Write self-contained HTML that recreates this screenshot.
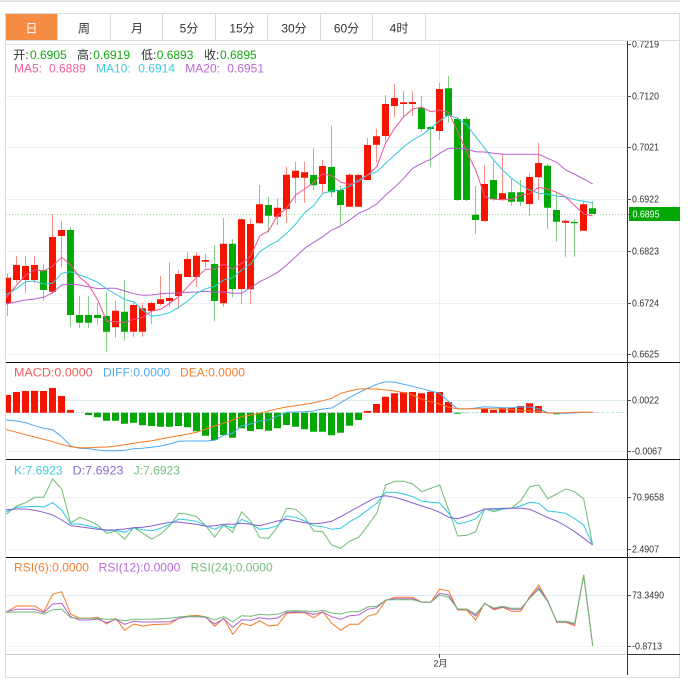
<!DOCTYPE html>
<html><head><meta charset="utf-8"><style>
html,body{margin:0;padding:0;background:#fff;width:688px;height:682px;overflow:hidden}
svg{display:block}
text{font-family:"Liberation Sans","Noto Sans CJK SC",sans-serif}
.t{font-size:12px;fill:#333}
.a{font-size:10px;fill:#333}
polyline{fill:none;stroke-width:1}
</style></head><body>
<svg xmlns="http://www.w3.org/2000/svg" width="688" height="682" viewBox="0 0 688 682">
<defs>
<clipPath id="c"><rect x="6" y="41" width="621" height="613"/></clipPath>
<clipPath id="ax"><rect x="628" y="41" width="52" height="620"/></clipPath>
</defs>
<rect x="0" y="0.5" width="680" height="1.2" fill="#d2d2d2"/>
<rect x="5.5" y="13.5" width="674" height="664" fill="none" stroke="#dcdcdc" stroke-width="1"/>
<rect x="6" y="14" width="51" height="26" fill="#f58c43"/>
<rect x="6" y="40" width="674" height="1" fill="#dcdcdc"/>
<path d="M57.5 14V40M110.5 14V40M162.5 14V40M215.5 14V40M267.5 14V40M320.5 14V40M372.5 14V40M425.5 14V40" stroke="#d8d8d8" stroke-width="1" fill="none"/>
<g text-anchor="middle">
<text x="31.5" y="32.5" class="t" style="fill:#fff">日</text>
<text x="84" y="32.5" class="t">周</text>
<text x="137" y="32.5" class="t">月</text>
<text x="189" y="32.5" class="t">5分</text>
<text x="242" y="32.5" class="t">15分</text>
<text x="294" y="32.5" class="t">30分</text>
<text x="346.5" y="32.5" class="t">60分</text>
<text x="399" y="32.5" class="t">4时</text>
</g>
<g fill="none" stroke-width="1">
<path d="M6 44.5H627" stroke="#dcebf1"/>
<path d="M6 96.5H627M6 147.5H627M6 199.5H627M6 251.5H627M6 303.5H627M6 354.5H627" stroke="#eaf0f4"/>
<path d="M6 400.5H627" stroke="#dcebf1"/>
<path d="M6 451.5H627M6 497.5H627M6 549.5H627M6 646.5H627" stroke="#eff3f5"/>
<path d="M6 595.5H627" stroke="#dcebf1"/>
<path d="M439.5 41V654" stroke="#edf1f4"/>
<path d="M6 412.5H627" stroke="#bfe2f0" stroke-dasharray="3 2"/>
<path d="M6 214.5H627" stroke="#8fdc8f" stroke-dasharray="1 2"/>
</g>
<g clip-path="url(#c)">
<path fill="none" stroke="#f98f87" stroke-width="1" d="M7.5 273.3V316M16.5 255.7V283M25.5 255.7V292.7M34.5 255.7V283.3M52.5 214V294M61.5 221V266.7M115.5 300.7V337.7M133.5 301.7V336.7M142.5 302.7V336.7M151.5 301.7V324M160.5 276V305.7M169.5 262.3V306.7M178.5 270V309.3M187.5 252.3V277M196.5 252.3V286.7M205.5 254V267.3M223.5 218V306.7M241.5 218.3V304M250.5 218.3V304M259.5 185V223.3M277.5 198.3V225M286.5 166.7V223.3M295.5 161.7V203M304.5 161.7V202.7M322.5 160V193M349.5 173.3V207M358.5 173.3V207M367.5 138V180M376.5 128.7V162.3M385.5 95V141.7M394.5 84V117.3M403.5 90.7V116.7M412.5 90.7V116M439.5 83V140M484.5 165V221.7M502.5 153.3V200.7M529.5 172.7V216M538.5 142.7V200M565.5 219.3V256.7M583.5 200.7V230.7"/>
<path fill="none" stroke="#80d080" stroke-width="1" d="M43.5 264V300.7M70.5 227.3V326.7M79.5 296V327.7M88.5 296V327.7M97.5 302.7V324.7M106.5 291.7V351.7M124.5 280V340.7M214.5 245V321.3M232.5 239.3V297.3M268.5 196.7V232.7M313.5 148.3V190M331.5 125.7V197M340.5 186V225M421.5 96V131.7M430.5 126V166.7M448.5 76V122.7M457.5 116.7V201M466.5 116.7V201M475.5 186V234M493.5 160.7V200.7M511.5 179V206M520.5 180V206M547.5 164V229.3M556.5 192.7V241.7M574.5 219.3V256.7M592.5 201.3V214"/>
<path fill="#f51400" d="M4 277.7h7V303.3h-7zM13 265h7V280h-7zM22 266h7V280h-7zM31 265h7V280h-7zM49 237h7V291.7h-7zM58 230h7V236h-7zM112 310.7h7V327.3h-7zM130 305h7V331.7h-7zM139 308.3h7V331.7h-7zM148 303h7V311h-7zM157 299.3h7V304h-7zM166 298h7V301h-7zM175 274h7V296h-7zM184 259h7V277h-7zM193 255.7h7V277h-7zM202 260h7V261.7h-7zM220 243.7h7V303.3h-7zM238 219.3h7V289h-7zM247 224h7V289.3h-7zM256 204.3h7V223.3h-7zM274 207.7h7V216.7h-7zM283 174.7h7V209h-7zM292 170.7h7V177.7h-7zM301 172.3h7V177.7h-7zM319 166h7V184h-7zM346 174.7h7V206.7h-7zM355 175h7V206.7h-7zM364 145h7V180h-7zM373 136.3h7V144.7h-7zM382 104h7V136h-7zM391 98h7V106h-7zM400 102.3h7V104h-7zM409 102h7V104h-7zM436 89h7V131h-7zM481 184h7V221h-7zM499 193.3h7V199.3h-7zM526 177h7V204h-7zM535 163h7V177.3h-7zM562 220.7h7V222.7h-7zM580 204.3h7V230.7h-7z"/>
<path fill="#04a804" d="M40 270h7V290h-7zM67 230h7V315h-7zM76 315h7V322.7h-7zM85 315h7V322.7h-7zM94 315h7V318h-7zM103 316h7V331.7h-7zM121 311.7h7V331.7h-7zM211 264h7V301h-7zM229 243.7h7V289h-7zM265 205h7V215.7h-7zM310 175h7V185.3h-7zM328 167h7V192.3h-7zM337 190h7V205h-7zM418 107.7h7V129h-7zM427 127h7V129h-7zM445 88.3h7V116h-7zM454 119h7V200h-7zM463 119h7V200h-7zM472 214.7h7V220h-7zM490 180h7V199.3h-7zM508 192.3h7V201.7h-7zM517 192.3h7V201.7h-7zM544 165.7h7V207.7h-7zM553 210h7V221.7h-7zM571 222h7V223.3h-7zM589 208.3h7V214h-7z"/>
<path fill="#f51400" d="M4 395h7V412.7h-7zM13 392h7V412.7h-7zM22 391h7V412.7h-7zM31 390.7h7V412.7h-7zM40 391h7V412.7h-7zM49 388h7V412.7h-7zM58 396h7V412.7h-7zM67 410h7V412.7h-7zM364 411h7V412.7h-7zM373 404h7V412.7h-7zM382 396.7h7V412.7h-7zM391 393.3h7V412.7h-7zM400 392.3h7V412.7h-7zM409 392h7V412.7h-7zM418 393.3h7V412.7h-7zM427 391.7h7V412.7h-7zM436 392h7V412.7h-7zM445 402h7V412.7h-7zM481 408.3h7V412.7h-7zM490 410h7V412.7h-7zM499 407.7h7V412.7h-7zM508 407.7h7V412.7h-7zM517 406h7V412.7h-7zM526 403.3h7V412.7h-7zM535 406h7V412.7h-7z"/>
<path fill="#04a804" d="M85 412.7h7V415h-7zM94 412.7h7V417.3h-7zM103 412.7h7V420.7h-7zM112 412.7h7V420.7h-7zM121 412.7h7V423.7h-7zM130 412.7h7V422.7h-7zM139 412.7h7V425.3h-7zM148 412.7h7V426h-7zM157 412.7h7V426.7h-7zM166 412.7h7V426.7h-7zM175 412.7h7V426h-7zM184 412.7h7V427.3h-7zM193 412.7h7V431.3h-7zM202 412.7h7V435.7h-7zM211 412.7h7V440h-7zM220 412.7h7V435h-7zM229 412.7h7V437.7h-7zM238 412.7h7V428.3h-7zM247 412.7h7V431h-7zM256 412.7h7V429.3h-7zM265 412.7h7V430.7h-7zM274 412.7h7V428.3h-7zM283 412.7h7V425h-7zM292 412.7h7V426.7h-7zM301 412.7h7V429.3h-7zM310 412.7h7V431.7h-7zM319 412.7h7V431.7h-7zM328 412.7h7V435.3h-7zM337 412.7h7V432.7h-7zM346 412.7h7V425.7h-7zM355 412.7h7V420h-7zM454 412.7h7V413.7h-7zM553 412.7h7V414.3h-7z"/>
<path fill="#b8e4b8" d="M463 412.7h7V413.5h-7zM472 412.7h7V413.3h-7zM562 412.7h7V413.3h-7zM571 412.7h7V413.3h-7z"/>
<path fill="#f8c0b8" d="M544 412.2h7V412.7h-7zM580 411.5h7V412.7h-7zM589 412.2h7V412.7h-7z"/>
<polyline stroke="#b45fd0" points="6,304 16.7,301.7 25.7,300 34.7,299 43.7,297.3 52.7,292.7 61.7,285 70.7,284.3 79.7,285 88.7,286.7 97.7,288.7 106.7,288.3 115.7,288.3 124.7,291 133.7,293.7 142.7,295.3 151.7,295 160.7,293.7 169.7,293.3 178.7,293 187.7,292.3 196.7,292 205.7,291.3 214.7,292.3 223.7,292 232.7,293.3 241.7,293.3 250.7,287.7 259.7,281.7 268.7,277.3 277.7,272.3 286.7,265 295.7,256.7 304.7,248.3 313.7,242.3 322.7,236.7 331.7,230 340.7,226 349.7,220 358.7,213.3 367.7,209.3 376.7,204 385.7,195 394.7,187.3 403.7,178.3 412.7,168.3 421.7,163.3 430.7,159.3 439.7,153.3 448.7,148.3 457.7,148.3 466.7,149 475.7,151.7 484.7,152 493.7,153.3 502.7,154.3 511.7,154.3 520.7,154.3 529.7,154.3 538.7,154.3 547.7,158.3 556.7,162.3 565.7,170 574.7,174.3 583.7,179 592.7,184"/>
<polyline stroke="#2fc8e0" points="6,295 16.7,288.3 25.7,281.7 34.7,281 43.7,284 52.7,283.3 61.7,273.3 70.7,271.7 79.7,275 88.7,278.3 97.7,282.3 106.7,289 115.7,294 124.7,299.7 133.7,301.7 142.7,310 151.7,316.3 160.7,315 169.7,312.7 178.7,307.3 187.7,301 196.7,293.3 205.7,288.7 214.7,286.3 223.7,280 232.7,277.7 241.7,270 250.7,264 259.7,251.7 268.7,245.7 277.7,241 286.7,233.3 295.7,224 304.7,212.7 313.7,205.7 322.7,193.3 331.7,191 340.7,190 349.7,186 358.7,180 367.7,175 376.7,171.7 385.7,163.3 394.7,155 403.7,146.7 412.7,140 421.7,135 430.7,128.3 439.7,120.7 448.7,115 457.7,118.3 466.7,125 475.7,136.7 484.7,148.3 493.7,160 502.7,170 511.7,178.3 520.7,185 529.7,190 538.7,193.3 547.7,194.3 556.7,196 565.7,197 574.7,199.7 583.7,201.3 592.7,202.7"/>
<polyline stroke="#ee5590" points="6,298 16.7,285 25.7,275 34.7,270 43.7,271 52.7,266 61.7,257.3 70.7,265 79.7,277.3 88.7,285 97.7,300 106.7,321 115.7,321.7 124.7,322.7 133.7,319.3 142.7,317.3 151.7,311 160.7,309.3 169.7,303.3 178.7,296.7 187.7,286.7 196.7,277.3 205.7,269.3 214.7,269.3 223.7,264 232.7,269.3 241.7,263.3 250.7,256 259.7,236 268.7,230.7 277.7,215 286.7,208.3 295.7,195 304.7,189 313.7,182.7 322.7,173.7 331.7,175.7 340.7,182.3 349.7,184.3 358.7,181.7 367.7,175 376.7,166.7 385.7,143 394.7,128.3 403.7,116.7 412.7,109 421.7,107.3 430.7,111.7 439.7,110.3 448.7,112.3 457.7,131.7 466.7,151.7 475.7,170 484.7,196.7 493.7,199.3 502.7,199.7 511.7,199.3 520.7,195 529.7,194 538.7,187.3 547.7,189 556.7,192.3 565.7,196.9 574.7,205.7 583.7,214 592.7,216"/>
<polyline stroke="#4ea8f0" points="6,420 16.7,421 25.7,422.7 34.7,425.7 43.7,428.3 52.7,429.7 61.7,436.7 70.7,446 79.7,448.3 88.7,448.7 97.7,450 106.7,450.7 115.7,450.7 124.7,450.3 133.7,448.7 142.7,448.3 151.7,447.3 160.7,446 169.7,444 178.7,441.3 187.7,441 196.7,441 205.7,441 214.7,440.3 223.7,435.3 232.7,433.3 241.7,425.7 250.7,424 259.7,420.7 268.7,420 277.7,416 286.7,412.3 295.7,412 304.7,411.7 313.7,411 322.7,409 331.7,408 340.7,402.7 349.7,397.3 358.7,392.7 367.7,388.3 376.7,384.3 385.7,381.7 394.7,382.3 403.7,384.3 412.7,386.3 421.7,388.7 430.7,391 439.7,393.3 448.7,401.7 457.7,409 466.7,409 475.7,408 484.7,406.7 493.7,407.3 502.7,407.7 511.7,407.7 520.7,407 529.7,407 538.7,408.7 547.7,412.7 556.7,413.3 565.7,413.3 574.7,412.7 583.7,412.3 592.7,412.3"/>
<polyline stroke="#f57a20" points="6,429.3 16.7,432.3 25.7,434.7 34.7,437 43.7,439.3 52.7,441.7 61.7,444.3 70.7,446.7 79.7,447.7 88.7,447.7 97.7,447.3 106.7,447 115.7,446 124.7,444.7 133.7,443.3 142.7,442 151.7,440.7 160.7,439 169.7,437.3 178.7,435.7 187.7,434 196.7,432.3 205.7,429 214.7,426 223.7,423.3 232.7,420 241.7,416.7 250.7,415 259.7,413.3 268.7,411 277.7,408.7 286.7,407 295.7,405.7 304.7,404.3 313.7,402.7 322.7,400.7 331.7,398.3 340.7,393.3 349.7,391 358.7,389 367.7,388.7 376.7,389 385.7,390 394.7,391 403.7,392.7 412.7,395 421.7,399.3 430.7,401.7 439.7,404 448.7,407.3 457.7,408.7 466.7,408.7 475.7,408.7 484.7,408.7 493.7,408.7 502.7,409 511.7,409.7 520.7,410.3 529.7,410.7 538.7,411.3 547.7,413 556.7,413 565.7,412.7 574.7,412.3 583.7,412.3 592.7,412.3"/>
<polyline stroke="#6dbd72" points="6,514.3 16.7,506 25.7,502.7 34.7,497.3 43.7,497.3 52.7,479 61.7,489 70.7,523.3 79.7,517.3 88.7,520.7 97.7,525 106.7,533.3 115.7,531 124.7,539.3 133.7,527.3 142.7,533.3 151.7,539 160.7,534 169.7,525.7 178.7,513.3 187.7,514.3 196.7,516.7 205.7,525.7 214.7,537 223.7,525 232.7,532.3 241.7,511.7 250.7,521 259.7,537.7 268.7,538.3 277.7,526.7 286.7,508.3 295.7,509.3 304.7,517.3 313.7,531 322.7,531.7 331.7,545 340.7,548.3 349.7,541 358.7,537.3 367.7,525.7 376.7,513.3 385.7,485 394.7,481.3 403.7,481.3 412.7,484 421.7,491.7 430.7,488.3 439.7,485 448.7,510 457.7,536 466.7,535.3 475.7,531.7 484.7,508.7 493.7,511.7 502.7,509.3 511.7,508 520.7,500.7 529.7,486.7 538.7,485 547.7,498.7 556.7,494 565.7,489 574.7,491.7 583.7,499 592.7,545"/>
<polyline stroke="#2fc8e0" points="6,511.7 16.7,507.3 25.7,506.7 34.7,506.3 43.7,507 52.7,502.7 61.7,510 70.7,524 79.7,524 88.7,526 97.7,528 106.7,530.7 115.7,530.3 124.7,532.3 133.7,527.7 142.7,529.7 151.7,530.7 160.7,528.3 169.7,524.3 178.7,519 187.7,520 196.7,521.3 205.7,525.7 214.7,529.3 223.7,525 232.7,528 241.7,519.3 250.7,523.3 259.7,529.3 268.7,528.3 277.7,525.7 286.7,516 295.7,517.3 304.7,521 313.7,525.7 322.7,526.7 331.7,529.3 340.7,528.3 349.7,521.7 358.7,516.7 367.7,510 376.7,503.3 385.7,492.3 394.7,492.3 403.7,494 412.7,496.7 421.7,501.3 430.7,502.3 439.7,503 448.7,513.3 457.7,524 466.7,522 475.7,519 484.7,509 493.7,510 502.7,509 511.7,508.3 520.7,506 529.7,502.3 538.7,503.3 547.7,511 556.7,512 565.7,513.3 574.7,518.7 583.7,525 592.7,545"/>
<polyline stroke="#8a5fd0" points="6,509.7 16.7,509 25.7,509 34.7,510.3 43.7,512.3 52.7,515 61.7,520 70.7,525.7 79.7,526.7 88.7,528 97.7,529.3 106.7,530 115.7,529.7 124.7,529 133.7,527.7 142.7,527.3 151.7,526 160.7,524 169.7,522.3 178.7,522 187.7,523.3 196.7,524.3 205.7,526.3 214.7,525.7 223.7,524.3 232.7,524.3 241.7,523.3 250.7,524.3 259.7,525.7 268.7,523.3 277.7,521 286.7,519.3 295.7,521 304.7,522.7 313.7,523.7 322.7,523 331.7,521.3 340.7,516.7 349.7,511.7 358.7,506.7 367.7,501.7 376.7,497.3 385.7,495.7 394.7,497.3 403.7,500 412.7,503 421.7,506 430.7,508.7 439.7,512.3 448.7,517.3 457.7,518.7 466.7,516 475.7,512.7 484.7,509 493.7,508.7 502.7,508.3 511.7,508.3 520.7,508.3 529.7,509.3 538.7,513.3 547.7,517.7 556.7,521 565.7,526 574.7,531.7 583.7,538.3 592.7,545"/>
<polyline stroke="#f57a20" points="6,612.3 16.7,606 25.7,606 34.7,606 43.7,611.7 52.7,594.3 61.7,591.7 70.7,614 79.7,618.3 88.7,618.3 97.7,617.3 106.7,624 115.7,618.3 124.7,630.3 133.7,624 142.7,626 151.7,624.7 160.7,624.3 169.7,624 178.7,618.3 187.7,616 196.7,615.3 205.7,617 214.7,626.3 223.7,618.3 232.7,634.3 241.7,623.3 250.7,625.7 259.7,620.7 268.7,626 277.7,625 286.7,613.3 295.7,612.7 304.7,612.7 313.7,617.7 322.7,611.7 331.7,623.3 340.7,630.3 349.7,624.3 358.7,624.3 367.7,616.3 376.7,613.7 385.7,600.7 394.7,597.3 403.7,597.3 412.7,597.3 421.7,602.3 430.7,602.3 439.7,589 448.7,591 457.7,610 466.7,610 475.7,620 484.7,603 493.7,610 502.7,607.3 511.7,611.3 520.7,611.3 529.7,596.7 538.7,585 547.7,600.7 556.7,622.3 565.7,622.3 574.7,625.7 583.7,575 592.7,645.7"/>
<polyline stroke="#b45fd0" points="6,611.7 16.7,609.3 25.7,609.3 34.7,609.3 43.7,612.7 52.7,604 61.7,603.3 70.7,616.7 79.7,620 88.7,620 97.7,619 106.7,622.7 115.7,619.3 124.7,624.3 133.7,621.3 142.7,622 151.7,622 160.7,622 169.7,621.7 178.7,618.3 187.7,616.7 196.7,616.7 205.7,617.3 214.7,624 223.7,618.7 232.7,627.3 241.7,619.7 250.7,620.3 259.7,617.7 268.7,619 277.7,618 286.7,612.3 295.7,612 304.7,612.3 313.7,614.3 322.7,612 331.7,616.7 340.7,619.3 349.7,615.7 358.7,615 367.7,609.3 376.7,607.7 385.7,600 394.7,598.7 403.7,598.7 412.7,598.7 421.7,602.3 430.7,602.3 439.7,593.3 448.7,595 457.7,609.3 466.7,609.3 475.7,616 484.7,603.3 493.7,608.7 502.7,607 511.7,609.3 520.7,609.3 529.7,597.7 538.7,587.7 547.7,600.7 556.7,621.7 565.7,621.7 574.7,624.3 583.7,575 592.7,645.7"/>
<polyline stroke="#6dbd72" points="6,612.3 16.7,612 25.7,612 34.7,612 43.7,614 52.7,609.7 61.7,609.3 70.7,617.7 79.7,618.3 88.7,618.3 97.7,618.3 106.7,619.3 115.7,619.3 124.7,620.7 133.7,619.3 142.7,619.3 151.7,619.3 160.7,618.7 169.7,618.3 178.7,617 187.7,616.3 196.7,616.3 205.7,616.7 214.7,620 223.7,616.7 232.7,621.7 241.7,615.7 250.7,616.3 259.7,614.3 268.7,615 277.7,614.3 286.7,611 295.7,610.7 304.7,611 313.7,611.7 322.7,610.3 331.7,613 340.7,614 349.7,611.7 358.7,611.7 367.7,607 376.7,606.3 385.7,600 394.7,599.7 403.7,599.7 412.7,599.7 421.7,602.3 430.7,602.3 439.7,595 448.7,597.3 457.7,609 466.7,609 475.7,614.3 484.7,603.7 493.7,608 502.7,606.3 511.7,608.3 520.7,608.3 529.7,598.3 538.7,589.3 547.7,601.7 556.7,621.3 565.7,621.3 574.7,623.3 583.7,575 592.7,645.7"/>
</g>
<g fill="none" stroke-width="1">
<path d="M6 362.5H680M6 459.5H680M6 557.5H680" stroke="#111"/>
<path d="M6 654.5H627" stroke="#cfcfcf"/>
<path d="M627 654.5H680" stroke="#333"/>
<path d="M627.5 41V675" stroke="#333"/>
<path d="M628 44.5H631M628 96.5H631M628 147.5H631M628 199.5H631M628 251.5H631M628 303.5H631M628 354.5H631M628 400.5H631M628 451.5H631M628 497.5H631M628 549.5H631M628 595.5H631M628 646.5H631M628 214.5H630M439.5 654V658" stroke="#555"/>
</g>
<rect x="629" y="207" width="51" height="14" fill="#04a804"/>
<g clip-path="url(#ax)">
<text class="a" x="632" y="47.5" textLength="27" lengthAdjust="spacingAndGlyphs">0.7219</text>
<text class="a" x="632" y="99.7" textLength="27" lengthAdjust="spacingAndGlyphs">0.7120</text>
<text class="a" x="632" y="150.7" textLength="27" lengthAdjust="spacingAndGlyphs">0.7021</text>
<text class="a" x="632" y="202.7" textLength="27" lengthAdjust="spacingAndGlyphs">0.6922</text>
<text class="a" x="632" y="254.7" textLength="27" lengthAdjust="spacingAndGlyphs">0.6823</text>
<text class="a" x="632" y="306.7" textLength="27" lengthAdjust="spacingAndGlyphs">0.6724</text>
<text class="a" x="632" y="357.7" textLength="27" lengthAdjust="spacingAndGlyphs">0.6625</text>
<text class="a" x="632" y="403.7" textLength="27" lengthAdjust="spacingAndGlyphs">0.0022</text>
<text class="a" x="632" y="454.7" textLength="30" lengthAdjust="spacingAndGlyphs">-0.0067</text>
<text class="a" x="632" y="500.7" textLength="32" lengthAdjust="spacingAndGlyphs">70.9658</text>
<text class="a" x="632" y="552.7" textLength="27" lengthAdjust="spacingAndGlyphs">2.4907</text>
<text class="a" x="632" y="598.7" textLength="32" lengthAdjust="spacingAndGlyphs">73.3490</text>
<text class="a" x="632" y="649.7" textLength="30" lengthAdjust="spacingAndGlyphs">-0.8713</text>
<text x="632.5" y="217.7" font-size="10" fill="#fff" textLength="27" lengthAdjust="spacingAndGlyphs">0.6895</text>
</g>
<text x="433.5" y="666.5" font-size="9" fill="#333">2月</text>
<g font-size="12">
<text x="13.3" y="59" fill="#333">开:</text><text x="30" y="59" fill="#14a814">0.6905</text>
<text x="77" y="59" fill="#333">高:</text><text x="93.3" y="59" fill="#14a814">0.6919</text>
<text x="141" y="59" fill="#333">低:</text><text x="156.7" y="59" fill="#14a814">0.6893</text>
<text x="204" y="59" fill="#333">收:</text><text x="220" y="59" fill="#14a814">0.6895</text>
<text x="14" y="72.7" fill="#f0609a">MA5:</text><text x="49" y="72.7" fill="#f0609a">0.6889</text>
<text x="96" y="72.7" fill="#3fcbe2">MA10:</text><text x="138.3" y="72.7" fill="#3fcbe2">0.6914</text>
<text x="185.3" y="72.7" fill="#bb69d6">MA20:</text><text x="227.3" y="72.7" fill="#bb69d6">0.6951</text>
<text x="14" y="376.7" fill="#f25c5c" textLength="78.7" lengthAdjust="spacingAndGlyphs">MACD:0.0000</text>
<text x="103" y="376.7" fill="#55aaf0" textLength="67.3" lengthAdjust="spacingAndGlyphs">DIFF:0.0000</text>
<text x="180" y="376.7" fill="#f57f2c" textLength="65" lengthAdjust="spacingAndGlyphs">DEA:0.0000</text>
<text x="14" y="474.7" fill="#3fcbe2" textLength="48.7" lengthAdjust="spacingAndGlyphs">K:7.6923</text>
<text x="72.7" y="474.7" fill="#8e69d6" textLength="50.7" lengthAdjust="spacingAndGlyphs">D:7.6923</text>
<text x="133.7" y="474.7" fill="#74c07a" textLength="46.3" lengthAdjust="spacingAndGlyphs">J:7.6923</text>
<text x="14" y="571.7" fill="#f57f2c" textLength="75" lengthAdjust="spacingAndGlyphs">RSI(6):0.0000</text>
<text x="98.7" y="571.7" fill="#bb69d6" textLength="81.7" lengthAdjust="spacingAndGlyphs">RSI(12):0.0000</text>
<text x="190.7" y="571.7" fill="#74c07a" textLength="82" lengthAdjust="spacingAndGlyphs">RSI(24):0.0000</text>
</g>
</svg>
</body></html>
